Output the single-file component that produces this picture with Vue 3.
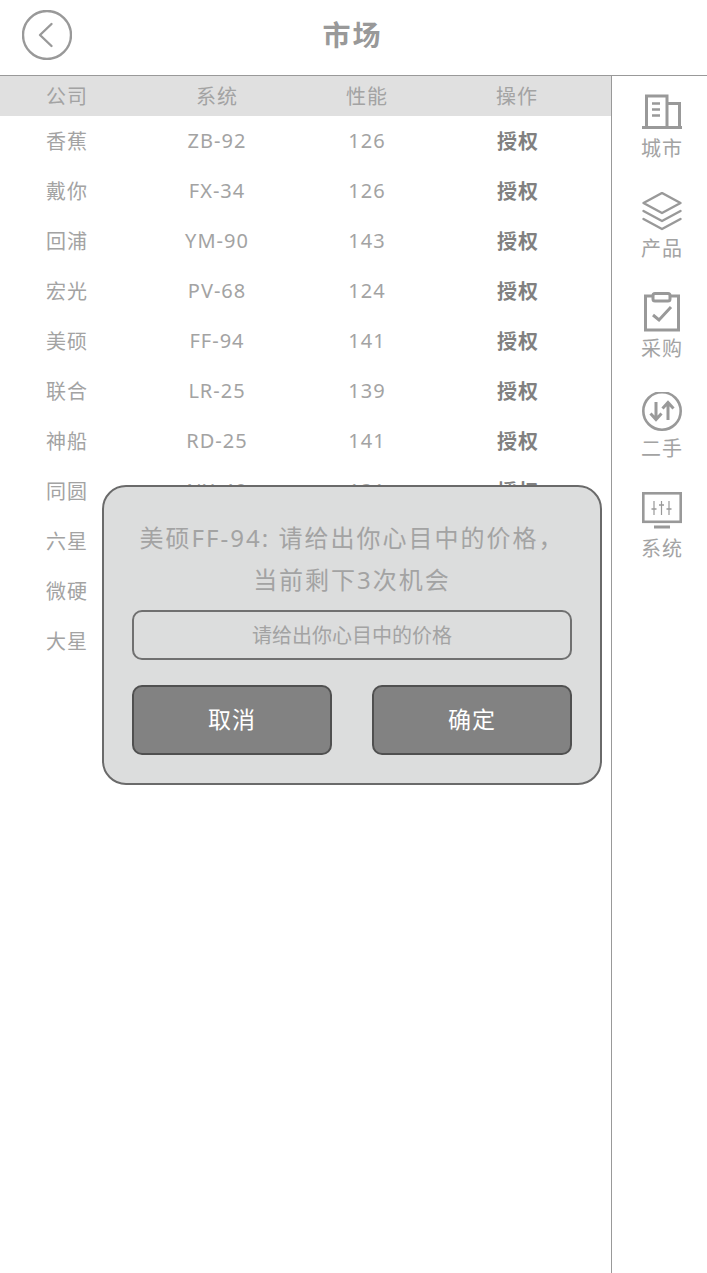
<template>
  <div class="page">
    <header class="top">
      <svg class="back" width="50" height="50" viewBox="0 0 50 50" fill="none">
        <circle cx="25" cy="25" r="24" stroke="#999" stroke-width="2.4" />
        <path d="M29.500 14 L18 25 L29.500 36" stroke="#999" stroke-width="2.4" stroke-linecap="round" stroke-linejoin="round" />
      </svg>
      <div class="title">市场</div>
    </header>

    <div class="body">
      <main class="market">
        <div class="row head">
          <div v-for="h in heads" :key="h">{{ h }}</div>
        </div>
        <div class="row" v-for="r in rows" :key="r[0]">
          <div>{{ r[0] }}</div>
          <div>{{ r[1] }}</div>
          <div>{{ r[2] }}</div>
          <div class="act" v-if="r[1]">授权</div>
        </div>

        <div class="dialog">
          <div class="msg">美硕FF-94: 请给出你心目中的价格，<br>当前剩下3次机会</div>
          <input class="price" placeholder="请给出你心目中的价格">
          <div class="btns">
            <button>取消</button>
            <button>确定</button>
          </div>
        </div>
      </main>

      <nav class="side">
        <div class="item">
          <svg width="40" height="40" viewBox="0 0 40 40" fill="none" stroke="#999" stroke-width="3">
            <path d="M4.500 35V4H25V35M25 11.500H37.500V35" />
            <path d="M0 35.500H40" />
            <path d="M10 11.500H18M10 17.500H18M10 23.500H18" stroke-width="2.400" />
          </svg>
          <span>城市</span>
        </div>
        <div class="item">
          <svg width="40" height="40" viewBox="0 0 40 40" fill="none" stroke="#999" stroke-width="2.400">
            <path d="M20 1 L38.500 11 L20 21 L1.500 11 Z" stroke-linejoin="round" />
            <path d="M1.500 19 L20 29 L38.500 19M1.500 27 L20 37 L38.500 27" stroke-linecap="round" stroke-linejoin="round" />
          </svg>
          <span>产品</span>
        </div>
        <div class="item">
          <svg width="40" height="40" viewBox="0 0 40 40" fill="none" stroke="#999" stroke-width="3">
            <path d="M11 4H3.500V38H36.500V4H29" />
            <rect x="11" y="1.500" width="17" height="7.500" rx="2" />
            <path d="M11 23 L17 28 L29 15" />
          </svg>
          <span>采购</span>
        </div>
        <div class="item">
          <svg width="40" height="40" viewBox="0 0 40 40" fill="none" stroke="#999" stroke-width="2.600">
            <circle cx="20" cy="19" r="18.700" />
            <path d="M14 10V27M8.500 21.500L14 27.500L19.500 21.500M26 28V11M20.500 16.500L26 10.500L31.500 16.500" stroke-width="3" />
          </svg>
          <span>二手</span>
        </div>
        <div class="item">
          <svg width="40" height="40" viewBox="0 0 40 40" fill="none" stroke="#999">
            <rect x="1.300" y="1.300" width="37.400" height="28.500" stroke-width="2.600" />
            <path d="M12 35H28" stroke-width="3" />
            <path d="M12 9V23M19.500 9V23M27 9V23" stroke-width="1.200" />
            <path d="M9.500 17H14.500M17 13H22M24.500 17H29.500" stroke-width="1.400" />
          </svg>
          <span>系统</span>
        </div>
      </nav>
    </div>
  </div>
</template>

<script setup>
const heads = ['公司', '系统', '性能', '操作']
const rows = [
  ['香蕉', 'ZB-92', 126],
  ['戴你', 'FX-34', 126],
  ['回浦', 'YM-90', 143],
  ['宏光', 'PV-68', 124],
  ['美硕', 'FF-94', 141],
  ['联合', 'LR-25', 139],
  ['神船', 'RD-25', 141],
  ['同圆', 'NX-40', 131],
  ['六星', '', ''],
  ['微硬', '', ''],
  ['大星', '', '']
]
</script>

<style>
html, body { background: #fff; }
</style>

<style scoped>
.page {
  width: 707px;
  height: 1273px;
  display: flex;
  flex-direction: column;
  overflow: hidden;
  font-family: "Noto Sans", "Noto Sans CJK SC", sans-serif;
  color: #a3a3a3;
}
.top {
  position: relative;
  flex: none;
  display: flex;
  align-items: center;
  justify-content: center;
  padding: 0 2px 8px 0;
  height: 67px;
  border-bottom: 1px solid #999;
}
.back {
  position: absolute;
  left: 22px;
  top: 10px;
}
.title {
  font-size: 28px;
  font-weight: 700;
  letter-spacing: 2px;
  color: #999;
}
.body {
  flex: 1;
  display: flex;
}
.market {
  position: relative;
  width: 611px;
  flex: none;
}
.row {
  display: grid;
  grid-template-columns: 142px 150px 150px 150px;
  height: 50px;
  padding-bottom: 2px;
  box-sizing: border-box;
  align-items: center;
  text-align: center;
  font-size: 20px;
  letter-spacing: 1px;
}
.row > div:first-child {
  padding-right: 8px;
}
.row.head {
  height: 40px;
  background: #e0e0e0;
}
.act {
  padding-left: 2px;
  font-weight: 700;
  color: #808080;
}
.dialog {
  position: absolute;
  left: 102px;
  top: 409px;
  width: 500px;
  height: 300px;
  box-sizing: border-box;
  padding: 30px 28px 0;
  background: #dcdddd;
  border: 2px solid #6a6a6a;
  border-radius: 24px;
  display: flex;
  flex-direction: column;
  text-align: center;
}
.msg {
  font-size: 24px;
  line-height: 42px;
  letter-spacing: 2px;
  white-space: nowrap;
}
.price {
  height: 50px;
  margin-top: 9px;
  box-sizing: border-box;
  width: 440px;
  background: transparent;
  border: 2px solid #707070;
  border-radius: 10px;
  outline: none;
  text-align: center;
  font-family: inherit;
  font-size: 20px;
}
.price::placeholder {
  color: #a3a3a3;
  opacity: 1;
}
.btns {
  display: flex;
  justify-content: space-between;
  margin-top: 25px;
}
.btns button {
  width: 200px;
  height: 70px;
  padding: 0 0 5px;
  background: #828282;
  border: 2px solid #505050;
  border-radius: 10px;
  color: #fff;
  font-family: inherit;
  font-size: 23px;
  letter-spacing: 1px;
}
.side {
  flex: 1;
  border-left: 1px solid #999;
  display: flex;
  flex-direction: column;
  padding-left: 5px;
}
.item {
  height: 100px;
  box-sizing: border-box;
  padding-top: 16px;
  display: flex;
  flex-direction: column;
  align-items: center;
  font-size: 20px;
  letter-spacing: 1px;
}
.item span {
  line-height: 30px;
  margin-top: 2px;
}
.item svg {
  flex: none;
}
</style>
